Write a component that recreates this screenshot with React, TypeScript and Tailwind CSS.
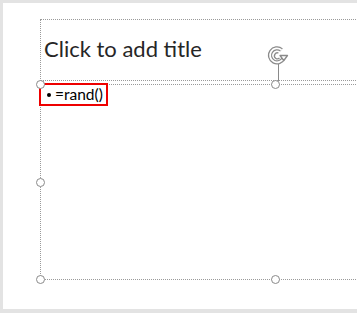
import React from 'react';

// Selection handle on the placeholder frame (overlays the dotted frame)
function Handle({ className }: { className: string }) {
  return (
    <div
      className={`absolute h-[9px] w-[9px] rounded-full border-[1.5px] border-[#8a8a8a] bg-white ${className}`}
    />
  );
}

function RotateIcon() {
  return (
    <svg width="22" height="19" viewBox="1 0 22 19">
      <g fill="none">
        <path d="M17.5 12 A7 7 0 1 1 15.5 4" stroke="#8a8a8a" strokeWidth="4.2" />
        <path d="M17.5 12 A7 7 0 1 1 15.5 4" stroke="#ffffff" strokeWidth="1.8" />
        <path d="M12.5 7 A3 3 0 1 0 13.5 12" stroke="#8a8a8a" strokeWidth="1.3" />
      </g>
      <path
        d="M14 9.5 L21.5 9.5 L17.8 14.5 Z"
        fill="#ffffff"
        stroke="#8a8a8a"
        strokeWidth="1.3"
        strokeLinejoin="round"
      />
    </svg>
  );
}

export default function App() {
  return (
    <div className="h-[313px] w-[357px] overflow-hidden bg-[#e3e3e3] pl-[3px] pt-[3px]">
      <div className="relative flex h-[306px] w-[354px] flex-col gap-[3px] bg-white pl-[37px] pt-[16px]">
        {/* title placeholder */}
        <div className="h-[62px] w-[340px] shrink-0 border border-dotted border-[#9a9a9a] pl-[3px] pt-[16px]">
          <div
            className="text-[22px] leading-[26px] text-[#262626]"
            style={{ fontFamily: 'Lato, "Open Sans", sans-serif', fontWeight: 400 }}
          >
            Click to add title
          </div>
        </div>

        {/* content placeholder */}
        <div className="relative h-[196px] w-[340px] shrink-0 border border-dotted border-[#9a9a9a]">
          <div
            className="-ml-[2px] -mt-[2px] flex h-[23px] w-[69px] items-center gap-[4px] border-2 border-[#ee0000] pl-[6px] text-[15.5px] text-black"
            style={{ fontFamily: 'Lato, "Open Sans", sans-serif' }}
          >
            <span className="h-[4px] w-[4px] shrink-0 rounded-full bg-black" />
            <span className="leading-none">=rand()</span>
          </div>

          {/* rotation handle + stem */}
          <div className="absolute -top-[39px] left-[226px] flex flex-col items-center">
            <RotateIcon />
            <div className="-mt-[1px] h-[17px] w-px bg-[#8a8a8a]" />
          </div>

          <Handle className="-left-[5px] -top-[5px]" />
          <Handle className="left-[230px] -top-[5px]" />
          <Handle className="-left-[5px] top-[93px]" />
          <Handle className="-left-[5px] -bottom-[5px]" />
          <Handle className="left-[230px] -bottom-[5px]" />
        </div>
      </div>
    </div>
  );
}
